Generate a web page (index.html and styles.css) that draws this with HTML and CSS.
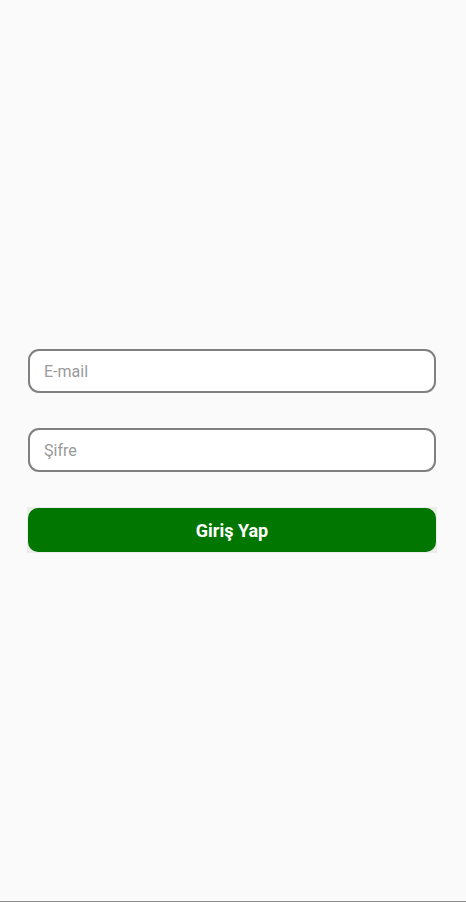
FILE: index.html
```html
<!DOCTYPE html>
<html lang="tr">
<head>
<meta charset="utf-8">
<title>Giriş</title>
<link rel="stylesheet" href="styles.css">
</head>
<body>
<main class="screen">
  <form class="login">
    <input class="field" type="email" placeholder="E-mail">
    <input class="field" type="password" placeholder="Şifre">
    <div class="btn-wrap"><button class="btn" type="button">Giriş Yap</button></div>
  </form>
</main>
</body>
</html>
```
FILE: styles.css
```css
* { box-sizing: border-box; }
html, body { margin: 0; padding: 0; }
body {
  background: #fafafa;
  font-family: Roboto, "Noto Sans", sans-serif;
}
.screen {
  height: 902px;
  border-bottom: 1px solid #8a8a8a;
  display: flex;
  align-items: center;
  justify-content: center;
  padding: 1px 30px 0 28px;
}
.login {
  width: 100%;
  display: flex;
  flex-direction: column;
  gap: 35px;
}
.field {
  height: 44px;
  width: 100%;
  border: 2px solid #808080;
  border-radius: 11px;
  background: #fff;
  padding: 0 14px;
  font-family: Roboto, sans-serif;
  font-size: 16px;
  color: #333;
  outline: none;
}
.field::placeholder { color: #9a9a9a; }
.btn-wrap {
  background: #ececec;
  margin: 0 -1px;
  padding: 1px;
}
.btn {
  display: block;
  width: 100%;
  height: 44px;
  border: none;
  border-radius: 10px;
  background: #017601;
  color: #fff;
  font-family: Roboto, sans-serif;
  font-weight: 700;
  font-size: 18px;
  padding: 0;
}
```
